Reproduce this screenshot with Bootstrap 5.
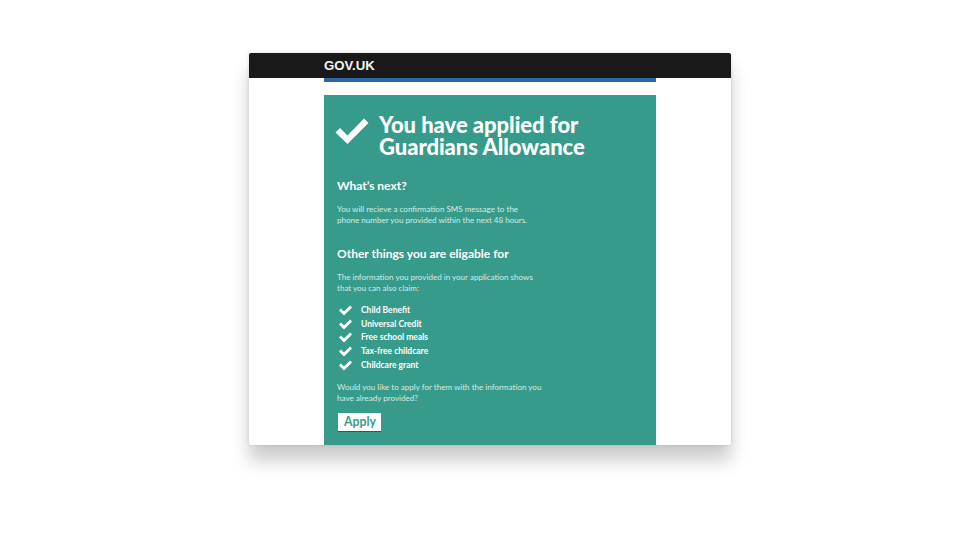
<!DOCTYPE html>
<html lang="en">
<head>
<meta charset="utf-8">
<title>GOV.UK</title>
<link href="https://cdn.jsdelivr.net/npm/bootstrap@5.3.0/dist/css/bootstrap.min.css" rel="stylesheet">
<style>
html,body{height:100%;}
body{background:#fff;font-family:"Lato","Liberation Sans",sans-serif;padding-top:53px;overflow:hidden;}
.device{width:482px;height:392px;margin:0 auto;transform:translateX(10px);background:#fff;border-radius:2px;box-shadow:0 16px 18px rgba(0,0,0,.2),0 0 4px rgba(0,0,0,.12);overflow:hidden;}
.topbar{background:#191919;height:25px;padding-left:75px;padding-top:1px;}
.brand{color:#f4f4f4;font-family:"Liberation Sans",sans-serif;font-weight:700;font-size:13.2px;line-height:24px;display:block;}
.colwrap{width:332px;margin-left:75px;}
.bluebar{height:3.5px;background:#2a67a5;}
.panel{background:#369b8b;height:350px;margin-top:13.5px;color:#fff;padding:19px 13px 0 13px;}
.title{font-size:22px;line-height:22px;font-weight:900;margin:0;letter-spacing:-.04px;}
.bigtick{width:34px;height:28px;margin-left:-2px;margin-right:10px;margin-top:3px;flex:none;}
.hd{font-size:12px;line-height:16px;font-weight:700;margin:0;}
.txt{font-size:8.05px;line-height:11px;color:#d5ece7;margin:0;width:204px;}
.txt-wide{width:212px;}
.ticks{margin:0;padding:0;list-style:none;}
.ticks li{display:flex;align-items:center;height:13.7px;font-size:8.5px;font-weight:700;}
.ticks svg{width:13px;height:11px;margin-left:2px;margin-right:9px;flex:none;}
.applybtn{background:#fff;color:#369b8b;font-size:12.3px;line-height:18px;font-weight:700;border:0;border-radius:0;padding:0 6px;height:18px;width:43px;margin-left:1px;box-shadow:0 1px 0 #1f5f55;display:block;}
</style>
</head>
<body>
<div class="device">
  <div class="topbar"><span class="brand">GOV.UK</span></div>
  <div class="colwrap">
    <div class="bluebar"></div>
    <div class="panel">
      <div class="d-flex align-items-start">
        <svg class="bigtick" viewBox="0 0 34 28" aria-hidden="true"><path d="M0.5 15.5 L5 11 L12.5 18.5 L29 1.5 L33.5 6 L12.5 27 Z" fill="#fff"/></svg>
        <h1 class="title">You have applied for<br>Guardians Allowance</h1>
      </div>
      <h2 class="hd" style="margin-top:20px">What’s next?</h2>
      <p class="txt" style="margin-top:10px">You will recieve a confirmation SMS message to the phone number you provided within the next 48 hours.</p>
      <h2 class="hd" style="margin-top:20px">Other things you are eligable for</h2>
      <p class="txt" style="margin-top:10px">The information you provided in your application shows that you can also claim:</p>
      <ul class="ticks" style="margin-top:9.5px">
        <li><svg viewBox="0 0 13 11"><path d="M0 5.5 L2 3.5 L5 6.5 L11 .5 L13 2.5 L5 10.5 Z" fill="#fff"/></svg>Child Benefit</li>
        <li><svg viewBox="0 0 13 11"><path d="M0 5.5 L2 3.5 L5 6.5 L11 .5 L13 2.5 L5 10.5 Z" fill="#fff"/></svg>Universal Credit</li>
        <li><svg viewBox="0 0 13 11"><path d="M0 5.5 L2 3.5 L5 6.5 L11 .5 L13 2.5 L5 10.5 Z" fill="#fff"/></svg>Free school meals</li>
        <li><svg viewBox="0 0 13 11"><path d="M0 5.5 L2 3.5 L5 6.5 L11 .5 L13 2.5 L5 10.5 Z" fill="#fff"/></svg>Tax-free childcare</li>
        <li><svg viewBox="0 0 13 11"><path d="M0 5.5 L2 3.5 L5 6.5 L11 .5 L13 2.5 L5 10.5 Z" fill="#fff"/></svg>Childcare grant</li>
      </ul>
      <p class="txt txt-wide" style="margin-top:10.5px">Would you like to apply for them with the information you have already provided?</p>
      <button type="button" class="btn applybtn" style="margin-top:9px">Apply</button>
    </div>
  </div>
</div>
<script src="https://cdn.jsdelivr.net/npm/bootstrap@5.3.0/dist/js/bootstrap.bundle.min.js"></script>
</body>
</html>
